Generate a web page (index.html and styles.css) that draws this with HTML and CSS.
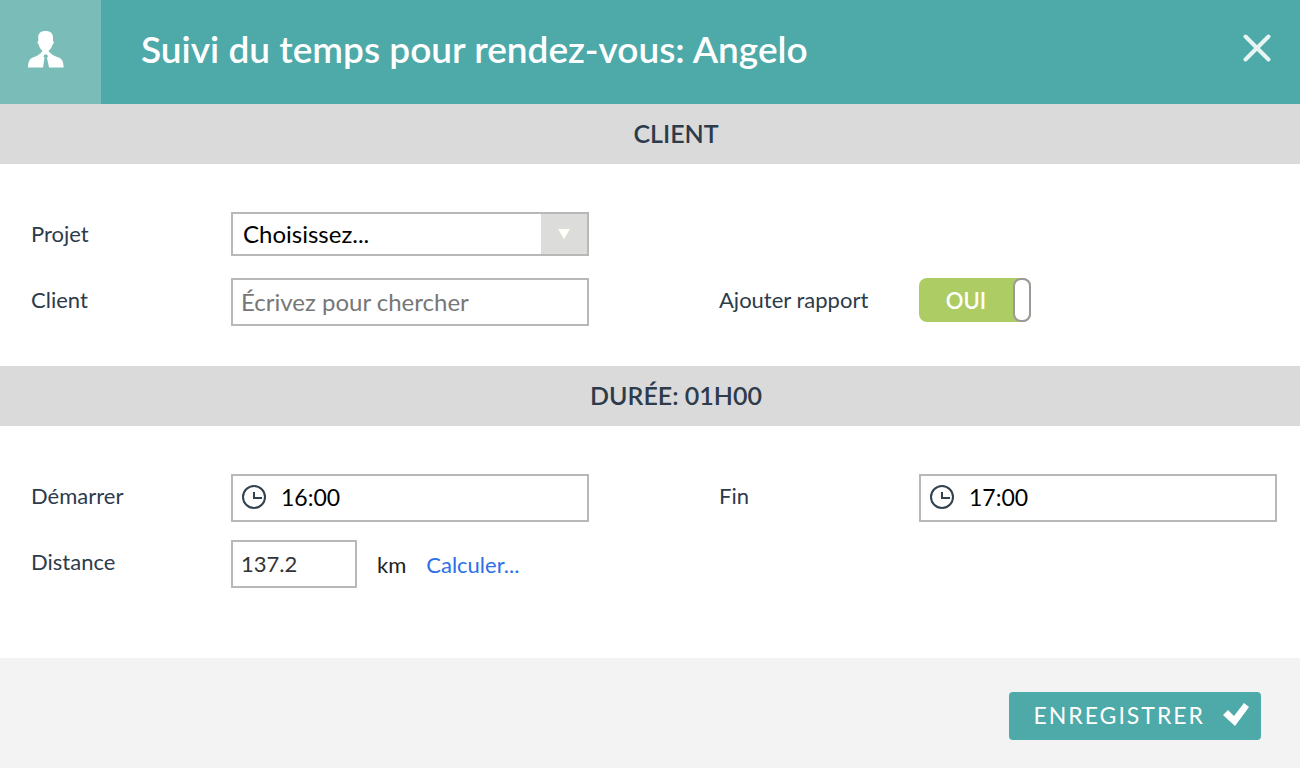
FILE: index.html
```html
<!DOCTYPE html>
<html lang="fr">
<head>
    <meta charset="UTF-8">
    <meta name="viewport" content="width=device-width, initial-scale=1.0">
    <title>Suivi du temps</title>
    <link rel="stylesheet" href="styles.css">
</head>
<body>
    <header class="header">
        <div class="header-icon">
            <svg width="36" height="37" viewBox="0 0 36 37" fill="#fff" aria-hidden="true">
                <path d="M17.500 0c5 0 8 2.600 7.500 7.500v2.500c1.200.3.900 3-.4 3.600-.5 2.600-2 4.500-4.100 6.400 2 3 5.500 4.600 10 6.600 3.500 1.600 4.700 3.400 5.200 9.900H21l-2-9.500 1-1.800-1-1.700h-2.500l-1 1.700 1 1.800-1.500 9.500H0c.4-6.500 1.500-8.300 5-9.900 4.500-2 7.500-3.600 9.500-6.600-2.100-1.900-3.300-3.800-3.800-6.400-1.300-.6-1.600-3.300-.4-3.600V7.500C9.600 2.600 12.500 0 17.500 0z"/>
            </svg>
        </div>
        <h1 class="title">Suivi du temps pour rendez-vous: Angelo</h1>
        <button type="button" class="close" aria-label="Fermer">
            <svg width="28" height="28" viewBox="0 0 28 28" fill="none" stroke="#e6f4f3" stroke-width="4" stroke-linecap="round">
                <path d="M2.500 2.500l23 23M25.500 2.500l-23 23"/>
            </svg>
        </button>
    </header>

    <form class="form">
        <h2 class="section-title">CLIENT</h2>
        <div class="section">
            <div class="row">
                <div class="field">
                    <label for="project">Projet</label>
                    <div class="select">
                        <select id="project">
                            <option>Choisissez...</option>
                        </select>
                        <span class="select-arrow">
                            <svg width="12" height="10" viewBox="0 0 12 10" fill="#fffff8"><path d="M0 0h12L6 10z"/></svg>
                        </span>
                    </div>
                </div>
            </div>
            <div class="row">
                <div class="field">
                    <label for="client">Client</label>
                    <input type="text" class="input" id="client" placeholder="Écrivez pour chercher">
                </div>
                <div class="field">
                    <label for="report">Ajouter rapport</label>
                    <div class="toggle">
                        <input type="checkbox" id="report" checked>
                        <span class="toggle-text">OUI</span>
                        <span class="toggle-knob"></span>
                    </div>
                </div>
            </div>
        </div>

        <h2 class="section-title">DURÉE: 01H00</h2>
        <div class="section section-last">
            <div class="row">
                <div class="field">
                    <label for="start">Démarrer</label>
                    <div class="input time">
                        <svg width="26" height="26" viewBox="0 0 26 26" fill="none" stroke="#33414f" stroke-width="2">
                            <circle cx="13" cy="13" r="11"/>
                            <path d="M13 8v6h8"/>
                        </svg>
                        <input type="text" id="start" value="16:00">
                    </div>
                </div>
                <div class="field">
                    <label for="end">Fin</label>
                    <div class="input time">
                        <svg width="26" height="26" viewBox="0 0 26 26" fill="none" stroke="#33414f" stroke-width="2">
                            <circle cx="13" cy="13" r="11"/>
                            <path d="M13 8v6h8"/>
                        </svg>
                        <input type="text" id="end" value="17:00">
                    </div>
                </div>
            </div>
            <div class="row">
                <div class="field">
                    <label for="distance">Distance</label>
                    <div class="distance">
                        <input type="text" class="input" id="distance" value="137.2">
                        <span>km</span>
                        <a href="#">Calculer...</a>
                    </div>
                </div>
            </div>
        </div>

        <div class="footer">
            <button type="submit" class="save">
                ENREGISTRER
                <svg width="26" height="24" viewBox="0 0 26 24" fill="#fff" aria-hidden="true">
                    <path d="M0 12l5-5 6 6L21 0l5 4-14 19z"/>
                </svg>
            </button>
        </div>
    </form>
</body>
</html>
```

FILE: styles.css
```css
* {
    box-sizing: border-box;
}
body {
    margin: 0;
    min-height: 100vh;
    display: flex;
    flex-direction: column;
    font-family: Lato, "Liberation Sans", sans-serif;
    font-size: 22px;
    color: #2d3b4b;
    background-color: #fff;
}
input, select, button {
    font-family: inherit;
    font-size: 24px;
}
.header {
    display: flex;
    align-items: center;
    height: 104px;
    padding-right: 29px;
    background-color: #4ea9a9;
    color: #fff;
}
.header-icon {
    display: flex;
    align-items: center;
    justify-content: center;
    width: 101px;
    height: 100%;
    padding: 0 10px 6px 0;
    background-color: #7abcb8;
}
.title {
    flex: 1;
    margin: 0;
    padding: 0 0 8px 40px;
    font-size: 37px;
    font-weight: 600;
}
.close {
    display: flex;
    padding: 0 0 8px;
    border: none;
    background: none;
    cursor: pointer;
}
.form {
    flex: 1;
    display: flex;
    flex-direction: column;
}
.section-title {
    margin: 0;
    padding: 0 0 2px 52px;
    background-color: #dadada;
    font-size: 25px;
    font-weight: 600;
    line-height: 58px;
    text-align: center;
}
.section {
    display: grid;
    gap: 18px;
    padding: 48px 23px 40px 31px;
}
.section-last {
    padding-bottom: 70px;
}
.row {
    display: grid;
    grid-template-columns: 1fr 1fr;
    gap: 130px;
    min-height: 48px;
}
.field {
    display: grid;
    grid-template-columns: 200px 1fr;
    align-items: start;
}
.field label {
    line-height: 44px;
}
.input {
    width: 100%;
    height: 48px;
    padding: 0 8px 2px;
    border: 2px solid #b8b8b8;
    background-color: #fff;
    color: #333;
}
.input::placeholder {
    color: #777;
    opacity: 1;
}
.select {
    position: relative;
}
.select select {
    width: 100%;
    height: 44px;
    padding: 0 56px 2px 10px;
    border: 2px solid #b8b8b8;
    border-radius: 0;
    background-color: #fff;
    color: #000;
    appearance: none;
}
.select-arrow {
    position: absolute;
    top: 2px;
    right: 2px;
    bottom: 2px;
    width: 46px;
    display: flex;
    align-items: center;
    justify-content: center;
    background-color: #dcdcda;
    pointer-events: none;
}
.toggle {
    position: relative;
    display: flex;
    width: 112px;
    height: 44px;
    border-radius: 8px;
    background-color: #adcd64;
}
.toggle input {
    position: absolute;
    inset: 0;
    width: 100%;
    height: 100%;
    margin: 0;
    opacity: 0;
    cursor: pointer;
}
.toggle-text {
    flex: 1;
    color: #fff;
    font-weight: 600;
    line-height: 46px;
    text-align: center;
}
.toggle-knob {
    width: 18px;
    border: 2px solid #999;
    border-radius: 8px;
    background-color: #fff;
}
.time {
    display: flex;
    align-items: center;
    gap: 14px;
}
.time input {
    flex: 1;
    min-width: 0;
    padding: 0;
    border: none;
    color: #000;
    font-size: 23px;
}
.distance {
    display: flex;
    align-items: center;
    gap: 20px;
    color: #222;
}
.distance .input {
    width: 126px;
    font-size: 22px;
}
.distance a {
    color: #2d6fe8;
    text-decoration: none;
}
.footer {
    flex: 1;
    display: flex;
    justify-content: flex-end;
    align-items: flex-start;
    padding: 34px 39px;
    background-color: #f3f3f3;
}
.save {
    display: flex;
    align-items: center;
    gap: 18px;
    height: 48px;
    padding: 0 12px 2px 24px;
    border: none;
    border-radius: 4px;
    background-color: #4ea9a9;
    color: #fff;
    font-size: 23px;
    letter-spacing: 2px;
    cursor: pointer;
}
```
